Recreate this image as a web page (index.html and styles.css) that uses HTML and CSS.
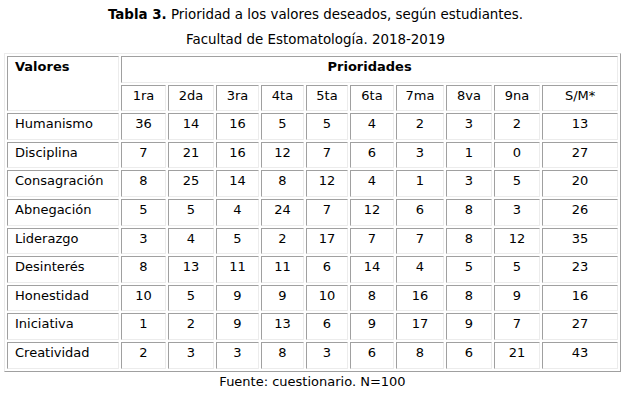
FILE: index.html
```html
<!DOCTYPE html>
<html lang="es">
<head>
<meta charset="utf-8">
<title>Tabla 3</title>
<link rel="stylesheet" href="styles.css">
</head>
<body>
<div class="caption">
  <div><b>Tabla 3.</b> Prioridad a los valores deseados, según estudiantes.</div>
  <div>Facultad de Estomatología. 2018-2019</div>
</div>
<div class="wrap">
<table class="data">
  <colgroup>
    <col class="c-val"><col class="c1"><col class="c2"><col class="c3"><col class="c4"><col class="c5"><col class="c6"><col class="c7"><col class="c8"><col class="c9"><col class="c10">
  </colgroup>
  <tr>
    <td rowspan="2" class="head left">Valores</td>
    <td colspan="10" class="head">Prioridades</td>
  </tr>
  <tr>
    <td>1ra</td><td>2da</td><td>3ra</td><td>4ta</td><td>5ta</td><td>6ta</td><td>7ma</td><td>8va</td><td>9na</td><td>S/M*</td>
  </tr>
  <tr><td class="left">Humanismo</td><td>36</td><td>14</td><td>16</td><td>5</td><td>5</td><td>4</td><td>2</td><td>3</td><td>2</td><td>13</td></tr>
  <tr><td class="left">Disciplina</td><td>7</td><td>21</td><td>16</td><td>12</td><td>7</td><td>6</td><td>3</td><td>1</td><td>0</td><td>27</td></tr>
  <tr><td class="left">Consagración</td><td>8</td><td>25</td><td>14</td><td>8</td><td>12</td><td>4</td><td>1</td><td>3</td><td>5</td><td>20</td></tr>
  <tr><td class="left">Abnegación</td><td>5</td><td>5</td><td>4</td><td>24</td><td>7</td><td>12</td><td>6</td><td>8</td><td>3</td><td>26</td></tr>
  <tr><td class="left">Liderazgo</td><td>3</td><td>4</td><td>5</td><td>2</td><td>17</td><td>7</td><td>7</td><td>8</td><td>12</td><td>35</td></tr>
  <tr><td class="left">Desinterés</td><td>8</td><td>13</td><td>11</td><td>11</td><td>6</td><td>14</td><td>4</td><td>5</td><td>5</td><td>23</td></tr>
  <tr><td class="left">Honestidad</td><td>10</td><td>5</td><td>9</td><td>9</td><td>10</td><td>8</td><td>16</td><td>8</td><td>9</td><td>16</td></tr>
  <tr><td class="left">Iniciativa</td><td>1</td><td>2</td><td>9</td><td>13</td><td>6</td><td>9</td><td>17</td><td>9</td><td>7</td><td>27</td></tr>
  <tr><td class="left">Creatividad</td><td>2</td><td>3</td><td>3</td><td>8</td><td>3</td><td>6</td><td>8</td><td>6</td><td>21</td><td>43</td></tr>
</table>
<div class="source">Fuente: cuestionario. N=100</div>
</div>
</body>
</html>
```
FILE: styles.css
```css
html, body {
  margin: 0;
  padding: 0;
  background: #fff;
}
body {
  font-family: "DejaVu Sans", Verdana, sans-serif;
  font-size: 13px;
  color: #000;
}
.caption {
  text-align: center;
  line-height: 25px;
  padding-top: 2px;
  font-size: 13.4px;
}
.wrap {
  width: 617px;
  margin: 1px 0 0 4px;
}
.data {
  width: 617px;
  table-layout: fixed;
  border-collapse: separate;
  border-spacing: 2px;
  border-style: solid;
  border-width: 1px;
  border-color: #ececec #a0a0a0 #a0a0a0 #ececec;
}
.data td {
  box-sizing: border-box;
  border-style: solid;
  border-width: 1px;
  border-color: #a0a0a0 #ececec #ececec #a0a0a0;
  padding: 2px 2px 7.6px;
  line-height: 15px;
  height: 26.6px;
  text-align: center;
  vertical-align: top;
  white-space: nowrap;
}
.data td.left {
  text-align: left;
  padding-left: 7px;
}
.data td.head {
  font-weight: bold;
}
.c-val { width: 112px; }
.c1 { width: 45px; }
.c2 { width: 46px; }
.c3 { width: 43px; }
.c4 { width: 43px; }
.c5 { width: 42px; }
.c6 { width: 44px; }
.c7 { width: 48px; }
.c8 { width: 46px; }
.c9 { width: 46px; }
.c10 { width: 76px; }
.source {
  text-align: center;
  line-height: 15px;
  margin-top: 2px;
}
```
